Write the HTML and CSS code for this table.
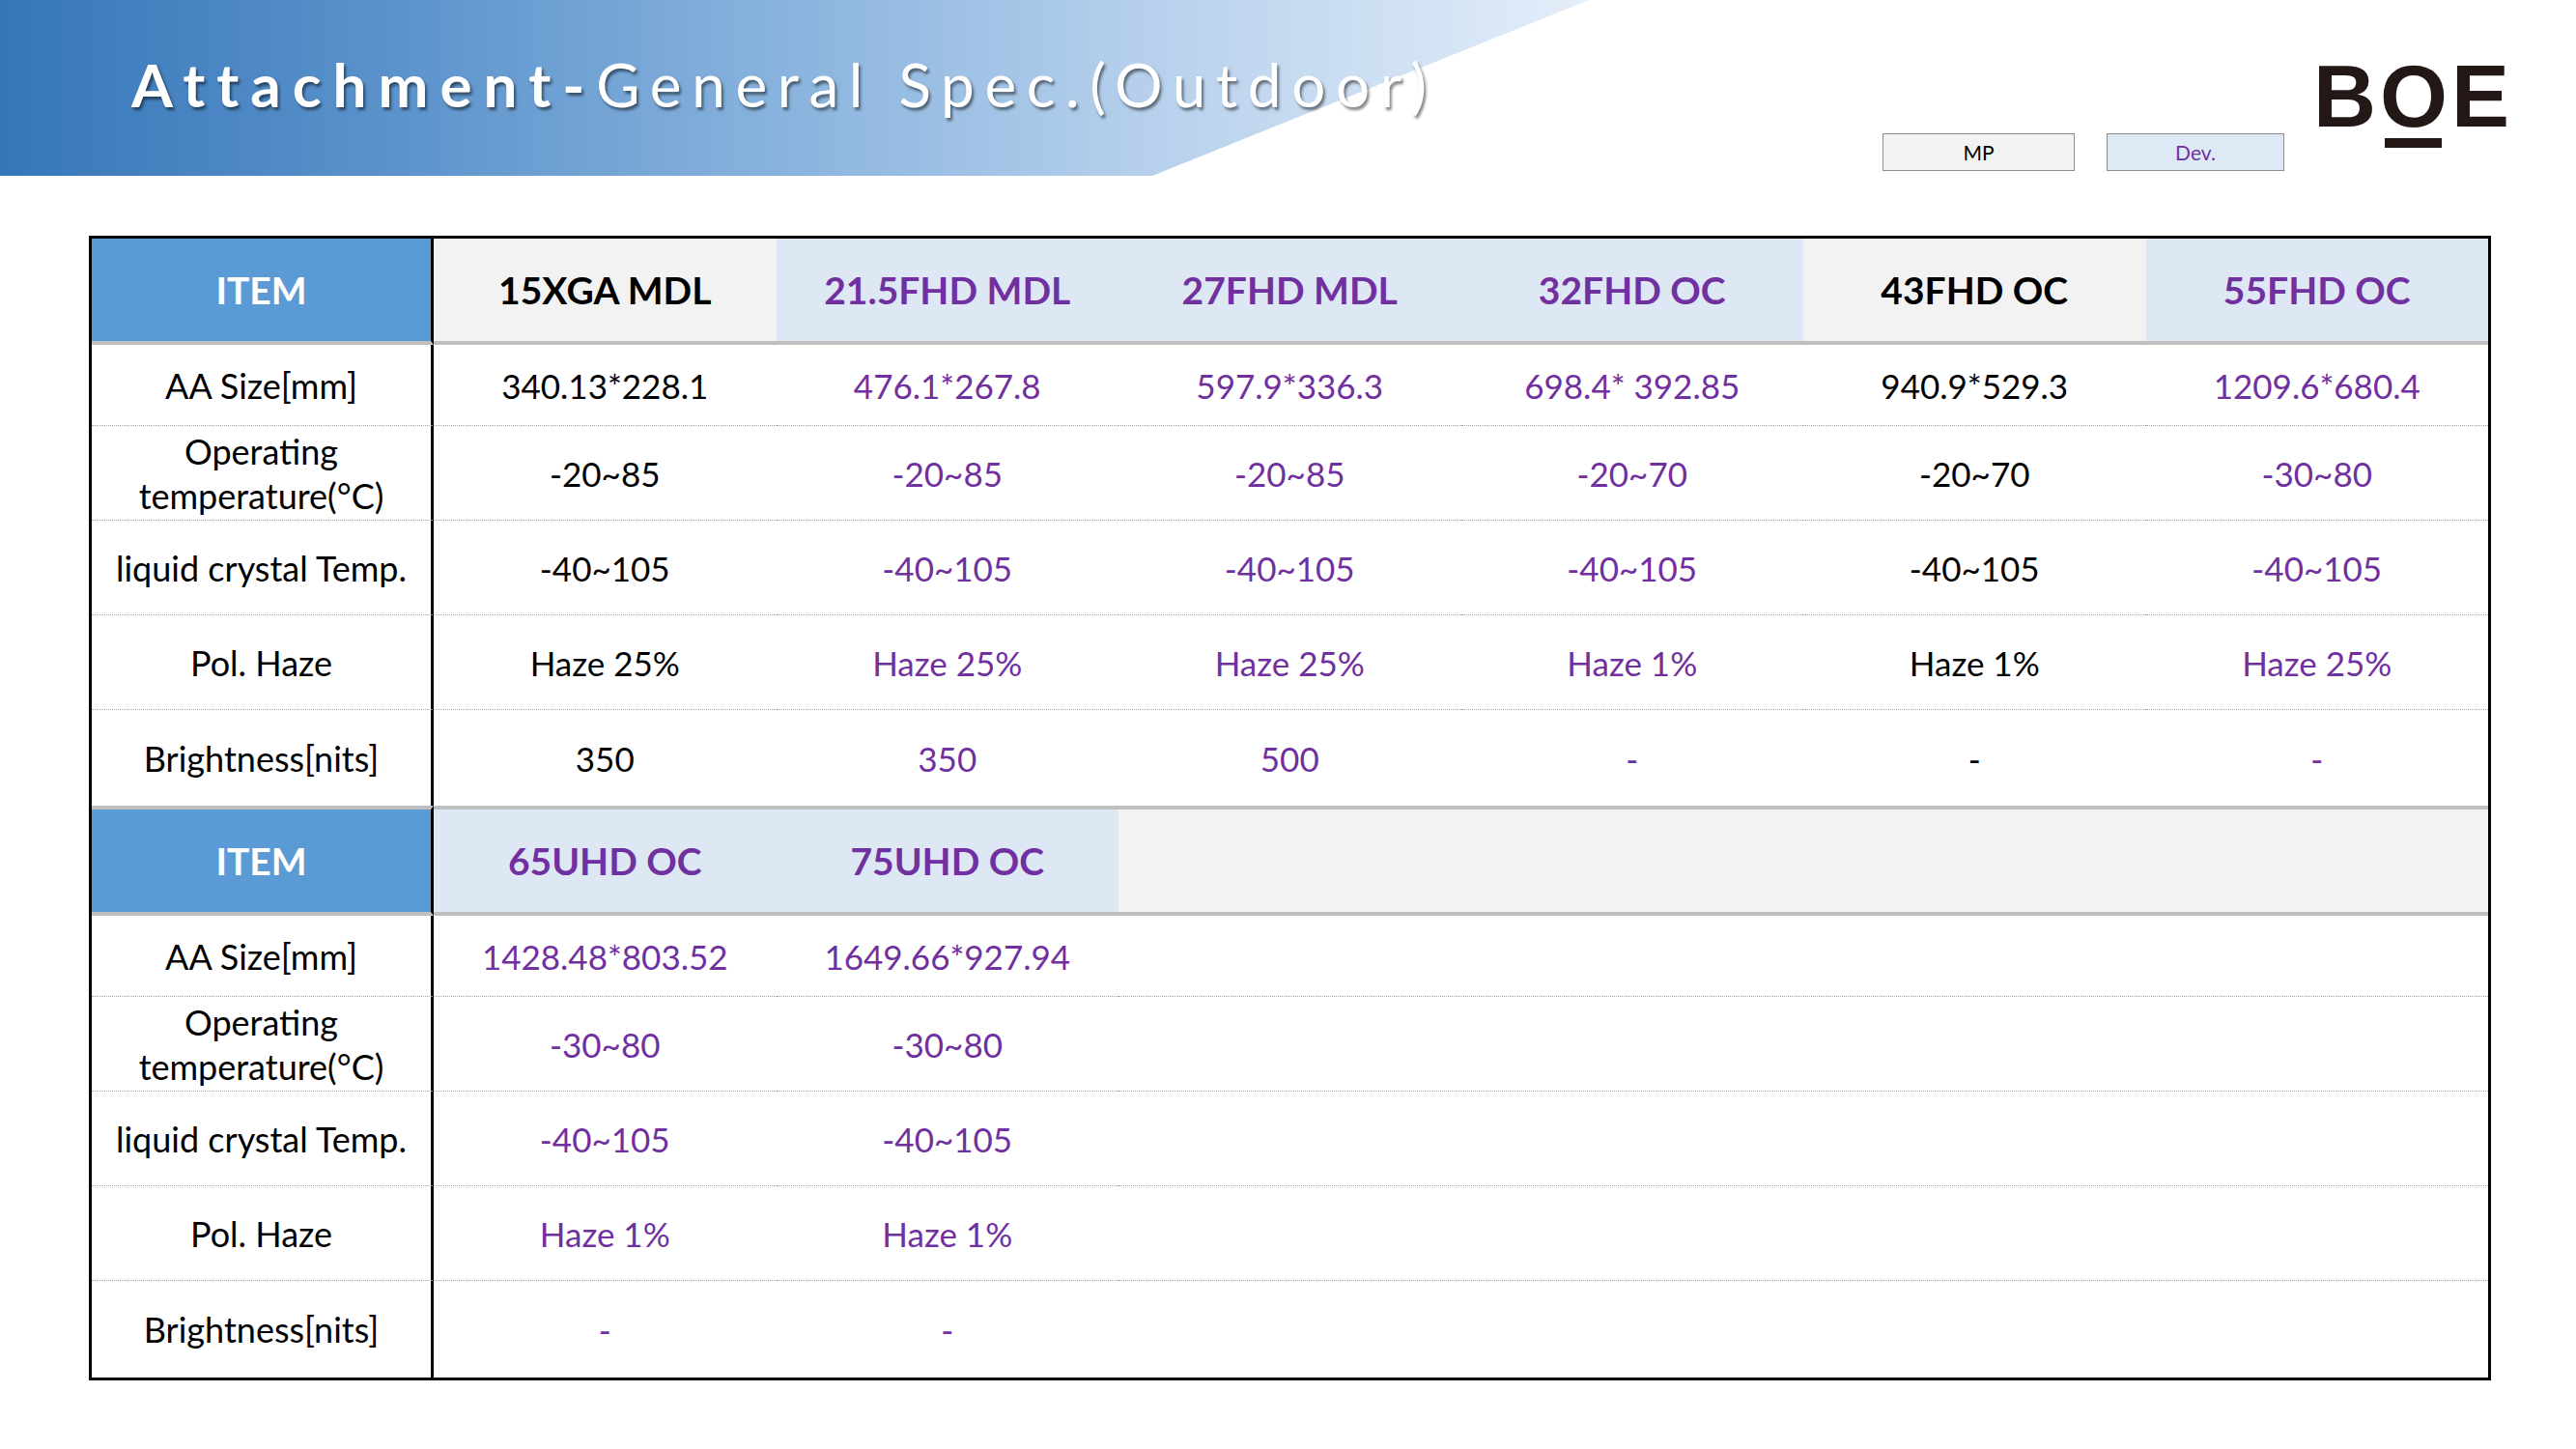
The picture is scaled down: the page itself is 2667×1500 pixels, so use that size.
FILE: index.html
```html
<!DOCTYPE html>
<html lang="en">
<head>
<meta charset="utf-8">
<title>Attachment-General Spec.(Outdoor)</title>
<link rel="stylesheet" href="styles.css">
</head>
<body>
<div class="page">
  <header class="top">
    <div class="banner">
      <h1 class="title"><span class="title-strong">Attachment-</span>General Spec.(Outdoor)</h1>
    </div>
    <div class="tags">
      <div class="tag tag-mp">MP</div>
      <div class="tag tag-dev">Dev.</div>
    </div>
    <div class="logo">B<span class="logo-o">O</span>E</div>
  </header>

  <main class="spec">
    <div class="c h h-item">ITEM</div>
    <div class="c h mp">15XGA MDL</div>
    <div class="c h dev">21.5FHD MDL</div>
    <div class="c h dev">27FHD MDL</div>
    <div class="c h dev">32FHD OC</div>
    <div class="c h mp">43FHD OC</div>
    <div class="c h dev">55FHD OC</div>

    <div class="c label">AA Size[mm]</div>
    <div class="c mp">340.13*228.1</div>
    <div class="c dev">476.1*267.8</div>
    <div class="c dev">597.9*336.3</div>
    <div class="c dev">698.4* 392.85</div>
    <div class="c mp">940.9*529.3</div>
    <div class="c dev">1209.6*680.4</div>

    <div class="c label">Operating<br>temperature(°C)</div>
    <div class="c mp">-20~85</div>
    <div class="c dev">-20~85</div>
    <div class="c dev">-20~85</div>
    <div class="c dev">-20~70</div>
    <div class="c mp">-20~70</div>
    <div class="c dev">-30~80</div>

    <div class="c label">liquid crystal Temp.</div>
    <div class="c mp">-40~105</div>
    <div class="c dev">-40~105</div>
    <div class="c dev">-40~105</div>
    <div class="c dev">-40~105</div>
    <div class="c mp">-40~105</div>
    <div class="c dev">-40~105</div>

    <div class="c label">Pol. Haze</div>
    <div class="c mp">Haze 25%</div>
    <div class="c dev">Haze 25%</div>
    <div class="c dev">Haze 25%</div>
    <div class="c dev">Haze 1%</div>
    <div class="c mp">Haze 1%</div>
    <div class="c dev">Haze 25%</div>

    <div class="c label last">Brightness[nits]</div>
    <div class="c mp last">350</div>
    <div class="c dev last">350</div>
    <div class="c dev last">500</div>
    <div class="c dev last">-</div>
    <div class="c mp last">-</div>
    <div class="c dev last">-</div>

    <div class="c h h2 h-item">ITEM</div>
    <div class="c h h2 dev">65UHD OC</div>
    <div class="c h h2 dev">75UHD OC</div>
    <div class="c h h2 blank"></div>

    <div class="c label">AA Size[mm]</div>
    <div class="c dev">1428.48*803.52</div>
    <div class="c dev">1649.66*927.94</div>
    <div class="c blank"></div>

    <div class="c label">Operating<br>temperature(°C)</div>
    <div class="c dev">-30~80</div>
    <div class="c dev">-30~80</div>
    <div class="c blank"></div>

    <div class="c label">liquid crystal Temp.</div>
    <div class="c dev">-40~105</div>
    <div class="c dev">-40~105</div>
    <div class="c blank"></div>

    <div class="c label">Pol. Haze</div>
    <div class="c dev">Haze 1%</div>
    <div class="c dev">Haze 1%</div>
    <div class="c blank"></div>

    <div class="c label last">Brightness[nits]</div>
    <div class="c dev last">-</div>
    <div class="c dev last">-</div>
    <div class="c blank last"></div>
  </main>
</div>
</body>
</html>
```

FILE: styles.css
```css
html, body {
  margin: 0;
  padding: 0;
  background: #ffffff;
}

body {
  font-family: Lato, "Open Sans", "Liberation Sans", sans-serif;
  color: #000000;
}

.page {
  width: 2667px;
  height: 1500px;
  overflow: hidden;
}

/* ---------- header ---------- */
.top {
  display: flex;
  align-items: flex-start;
  height: 244px;
  padding-right: 65px;
  box-sizing: border-box;
}

.banner {
  position: relative;
  flex: 0 0 1645px;
  height: 182px;
  box-sizing: border-box;
  padding: 56px 0 0 136px;
}

.banner::before {
  content: "";
  position: absolute;
  inset: 0;
  background: linear-gradient(90deg, #3676b8 0%, #5b93cc 25%, #8ab4de 50%, #b6d0ec 72%, #e4eef9 100%);
  clip-path: polygon(0 0, 100% 0, 1193px 100%, 0 100%);
}

.title {
  position: relative;
  margin: 0;
  font-size: 62px;
  line-height: 1;
  font-weight: 400;
  color: #ffffff;
  letter-spacing: 10.6px;
  white-space: nowrap;
  text-shadow: 2px 3px 3px rgba(0, 0, 0, 0.5);
}

.title-strong {
  font-weight: 700;
  letter-spacing: 12px;
}

.tags {
  display: flex;
  gap: 33px;
  margin: 138px 0 0 auto;
}

.tag {
  height: 39px;
  box-sizing: border-box;
  border: 1px solid #8c8c8c;
  display: flex;
  align-items: center;
  justify-content: center;
  font-size: 21px;
}

.tag-mp {
  width: 199px;
  background: #f2f2f2;
  color: #000000;
}

.tag-dev {
  width: 184px;
  background: #dee9f6;
  color: #7030a0;
}

.logo {
  margin: 55px 0 0 30px;
  font-family: "Liberation Sans", Arial, sans-serif;
  font-weight: 700;
  font-size: 90px;
  line-height: 1;
  color: #231815;
  letter-spacing: 4px;
}

.logo-o {
  position: relative;
}

.logo-o::after {
  content: "";
  position: absolute;
  left: 50%;
  top: 93px;
  width: 59px;
  height: 10px;
  margin-left: -32px;
  background: #231815;
}

/* ---------- spec table ---------- */
.spec {
  display: grid;
  grid-template-columns: 354px repeat(6, 1fr);
  grid-template-rows: 110px 84px 98px 98px 98px 99px 114px 84px 98px 98px 98px 100px;
  width: 2487px;
  margin-left: 92px;
  border: 3px solid #000000;
  box-sizing: border-box;
}

.c {
  display: flex;
  align-items: center;
  justify-content: center;
  text-align: center;
  box-sizing: border-box;
  font-size: 35px;
  line-height: 46px;
  border-bottom: 1px dotted #a6a6a6;
}

.label {
  font-size: 36px;
  border-right: 3px solid #000000;
  color: #000000;
}

.h {
  font-size: 39px;
  font-weight: 700;
  border-bottom: 4px solid #bfbfbf;
}

.h2 {
  border-top: 4px solid #bfbfbf;
}

.last {
  border-bottom: none;
}

.h-item {
  background: #5b9bd5;
  color: #ffffff;
  border-right: 3px solid #000000;
}

.mp {
  color: #000000;
}

.dev {
  color: #7030a0;
}

.h.mp {
  background: #f2f2f2;
}

.h.dev {
  background: #dee8f5;
}

.blank {
  grid-column: span 4;
}

.h.blank {
  background: #f2f2f2;
}
```
